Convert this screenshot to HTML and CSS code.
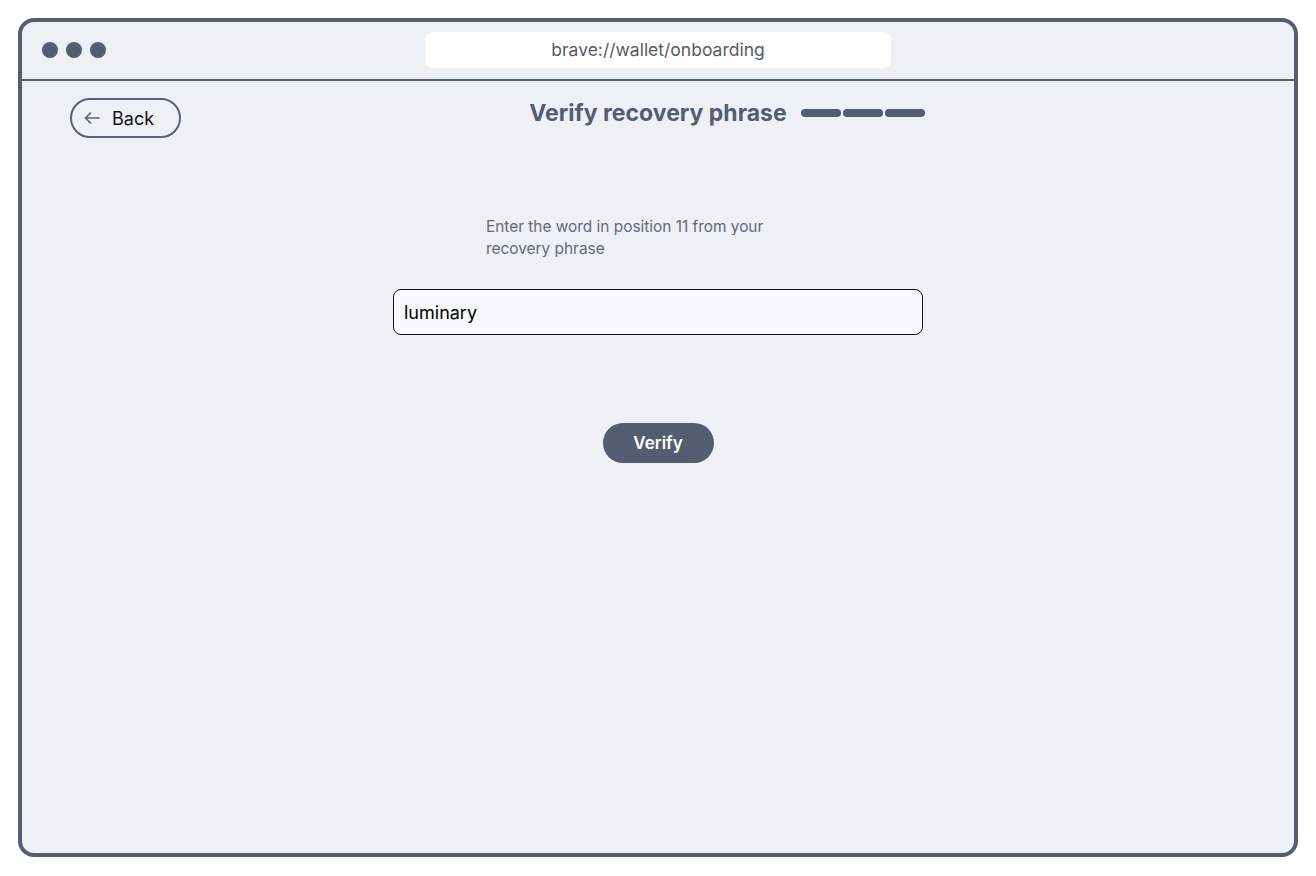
FILE: index.html
```html
<!DOCTYPE html>
<html lang="en">
<head>
<meta charset="UTF-8">
<meta name="viewport" content="width=device-width, initial-scale=1.0">
<title>Verify recovery phrase</title>
<link rel="stylesheet" href="styles.css">
</head>
<body>

<div class="window">
  <div class="toolbar">
    <div class="dots">
      <span class="dot"></span>
      <span class="dot"></span>
      <span class="dot"></span>
    </div>
    <div class="url">brave://wallet/onboarding</div>
  </div>

  <div class="page">
    <div class="header">
      <button class="back" type="button">
        <svg width="20" height="20" viewBox="0 0 20 20" fill="none" stroke="#5a6273" stroke-width="1.7" stroke-linecap="round" stroke-linejoin="round">
          <path d="M17 10H3.5"/>
          <path d="M8.5 5L3.5 10L8.5 15"/>
        </svg>
        <span>Back</span>
      </button>
      <h1 class="title">Verify recovery phrase</h1>
      <div class="steps">
        <span class="step"></span>
        <span class="step"></span>
        <span class="step"></span>
      </div>
    </div>

    <div class="verify">
      <p class="hint">Enter the word in position 11 from your recovery phrase</p>
      <input class="word" type="text" value="luminary">
      <button class="submit" type="button">Verify</button>
    </div>
  </div>
</div>

</body>
</html>
```

FILE: styles.css
```css
* {
  box-sizing: border-box;
}
body {
  margin: 0;
  background: #ffffff;
  font-family: 'Inter', 'Noto Sans', sans-serif;
}
div.window {  /* browser frame */
  margin: 18px;
  width: 1280px;
  height: 839px;
  border: 4px solid #545e70;
  border-radius: 16px;
  background: #edf0f4;
  overflow: hidden;
}
div.toolbar {
  display: grid;
  grid-template-columns: 1fr auto 1fr;
  align-items: center;
  height: 59px;
  padding: 0 20px 1px;
  border-bottom: 2px solid #545e70;
}
div.dots {
  display: flex;
  gap: 8px;
}
span.dot {
  width: 16px;
  height: 16px;
  border-radius: 50%;
  background: #545e70;
}
div.url {
  width: 466px;
  height: 36px;
  border-radius: 8px;
  background: #ffffff;
  color: #555b66;
  font-size: 17.5px;
  line-height: 36px;
  text-align: center;
}
div.page {
  padding: 17px 48px 0;
}
div.header {
  display: grid;
  grid-template-columns: 1fr auto 1fr;
  align-items: start;
}
button.back {
  justify-self: start;
  display: flex;
  align-items: center;
  gap: 10px;
  width: 111px;
  height: 40px;
  padding: 0 0 0 10px;
  border: 2px solid #5a6273;
  border-radius: 20px;
  background: transparent;
  color: #111111;
  font-family: inherit;
  font-size: 18px;
}
h1.title {
  margin: 0;
  color: #535d6f;
  font-size: 23px;
  font-weight: 700;
  line-height: 30px;
}
div.steps {
  display: flex;
  gap: 2px;
  margin: 11px 0 0 14px;
}
span.step {
  width: 40px;
  height: 8px;
  border-radius: 4px;
  background: #535d6f;
}
div.verify {
  display: flex;
  flex-direction: column;
  align-items: center;
}
p.hint {
  width: 344px;
  margin: 78px 0 0;
  padding-right: 50px;
  color: #636a77;
  font-size: 15.4px;
  line-height: 22px;
}
input.word {
  width: 530px;
  height: 46px;
  margin-top: 29px;
  padding: 0 10px;
  border: 1px solid #111111;
  border-radius: 8px;
  background: #f7fafd;
  color: #000000;
  font-family: inherit;
  font-size: 18px;
}
button.submit {
  width: 111px;
  height: 40px;
  margin-top: 88px;
  border: none;
  border-radius: 20px;
  background: #535d6f;
  color: #ffffff;
  font-family: inherit;
  font-size: 17px;
  font-weight: 600;
}
```
